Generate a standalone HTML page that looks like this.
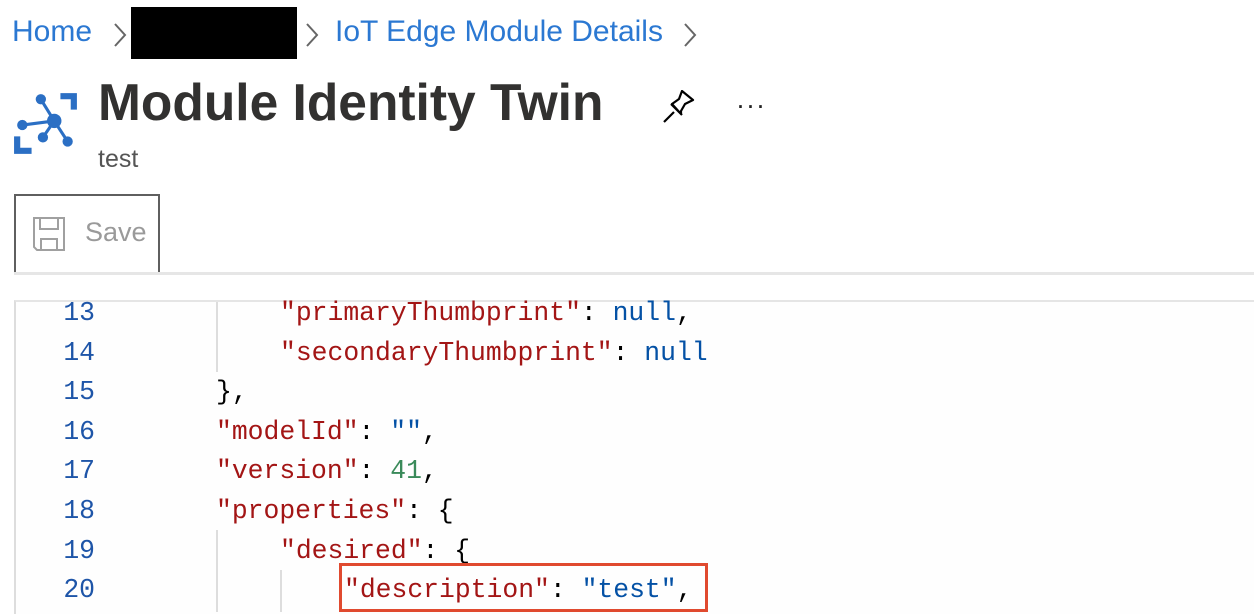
<!DOCTYPE html>
<html><head><meta charset="utf-8"><style>
body{margin:0;width:1254px;height:612px;background:#fff;overflow:hidden;position:relative;font-family:"Liberation Sans",sans-serif}
.a{position:absolute;white-space:nowrap}
.bc{font-size:30px;color:#2b78d2;top:15px}
.code{font-family:"Liberation Mono",monospace;font-size:26.4px;line-height:39.6px}
.s{color:#a31515}.k{color:#0451a5}.n{color:#3a8a5a}.p{color:#000}
.ln{color:#1e55a8;width:80px;text-align:right;left:15px}
.g{position:absolute;width:2px;background:#ddd}
</style></head><body>
<div class="a bc" style="left:12px">Home</div>
<svg class="a" style="left:110px;top:20px" width="20" height="30"><path d="M5 4l10 11-10 11" fill="none" stroke="#666" stroke-width="2"/></svg>
<div class="a" style="left:131px;top:7px;width:166px;height:52px;background:#000"></div>
<svg class="a" style="left:302px;top:20px" width="20" height="30"><path d="M5 4l10 11-10 11" fill="none" stroke="#666" stroke-width="2"/></svg>
<div class="a bc" style="left:335px">IoT Edge Module Details</div>
<svg class="a" style="left:680px;top:20px" width="20" height="30"><path d="M5 4l10 11-10 11" fill="none" stroke="#666" stroke-width="2"/></svg>

<svg class="a" style="left:12px;top:90px" width="68" height="68" viewBox="0 0 66 66">
<g fill="#2b6fc4"><path d="M47 3h16v16h-6v-10h-10z"/><path d="M2 45h6v11h11v6h-17z"/>
<g stroke="#2b6fc4" stroke-width="3"><line x1="28" y1="9" x2="41" y2="30"/><line x1="10" y1="34" x2="41" y2="30"/><line x1="41" y1="30" x2="30" y2="46"/><line x1="41" y1="30" x2="54" y2="50"/></g>
<circle cx="28" cy="9" r="5"/><circle cx="41" cy="30" r="7"/><circle cx="10" cy="34" r="5"/><circle cx="30" cy="46" r="5"/><circle cx="54" cy="50" r="5"/></g></svg>
<div class="a" style="left:98px;top:72px;font-size:51.5px;font-weight:bold;color:#323130">Module Identity Twin</div>
<svg class="a" style="left:662px;top:90px" width="36" height="34" viewBox="0 0 36 34"><path d="M2 32l10-10M9 14l11 11M10 14l7-5 3-8 11 9-8 4-4 7 0 3z" fill="none" stroke="#000" stroke-width="2.2" stroke-linejoin="round"/></svg>
<div class="a" style="left:736px;top:90px;font-size:27px;color:#222;letter-spacing:1px">···</div>
<div class="a" style="left:98px;top:145px;font-size:25px;color:#555">test</div>

<div class="a" style="left:14px;top:194px;width:142px;height:76px;border:2px solid #5f5f5f"></div>
<svg class="a" style="left:32px;top:216px" width="36" height="36" viewBox="0 0 36 36"><path d="M2 2h30v32h-27l-3-3zM8 2v11h18v-11M9 34v-11h16v11" fill="none" stroke="#a0a0a0" stroke-width="2"/></svg>
<div class="a" style="left:85px;top:217px;font-size:27px;color:#9a9a9a">Save</div>
<div class="a" style="left:14px;top:272px;width:1240px;height:3px;background:#e6e6e6"></div>

<div class="a" style="left:14px;top:300px;width:1240px;height:312px;border-left:2px solid #ddd;border-top:2px solid #e5e5e5;background:#fefefe"></div>
<div class="g" style="left:216px;top:302px;height:70px"></div>
<div class="g" style="left:216px;top:530px;height:82px"></div>
<div class="g" style="left:280px;top:570px;height:42px"></div>
<div class="a code" style="left:0;top:294px">
<div class="a ln" style="top:0">13</div><div class="a ln" style="top:39.6px">14</div><div class="a ln" style="top:79.2px">15</div><div class="a ln" style="top:118.8px">16</div><div class="a ln" style="top:158.4px">17</div><div class="a ln" style="top:198px">18</div><div class="a ln" style="top:237.6px">19</div><div class="a ln" style="top:277.2px">20</div>
<div class="a" style="left:280px;top:0"><span class="s">"primaryThumbprint"</span>: <span class="k">null</span>,</div>
<div class="a" style="left:280px;top:39.6px"><span class="s">"secondaryThumbprint"</span>: <span class="k">null</span></div>
<div class="a" style="left:216px;top:79.2px">},</div>
<div class="a" style="left:216px;top:118.8px"><span class="s">"modelId"</span>: <span class="k">""</span>,</div>
<div class="a" style="left:216px;top:158.4px"><span class="s">"version"</span>: <span class="n">41</span>,</div>
<div class="a" style="left:216px;top:198px"><span class="s">"properties"</span>: {</div>
<div class="a" style="left:280px;top:237.6px"><span class="s">"desired"</span>: {</div>
<div class="a" style="left:344px;top:277.2px"><span class="s">"description"</span>: <span class="k">"test"</span>,</div>
</div>
<div class="a" style="left:339px;top:563px;width:363px;height:43px;border:3px solid #e04a2f"></div>
</body></html>
